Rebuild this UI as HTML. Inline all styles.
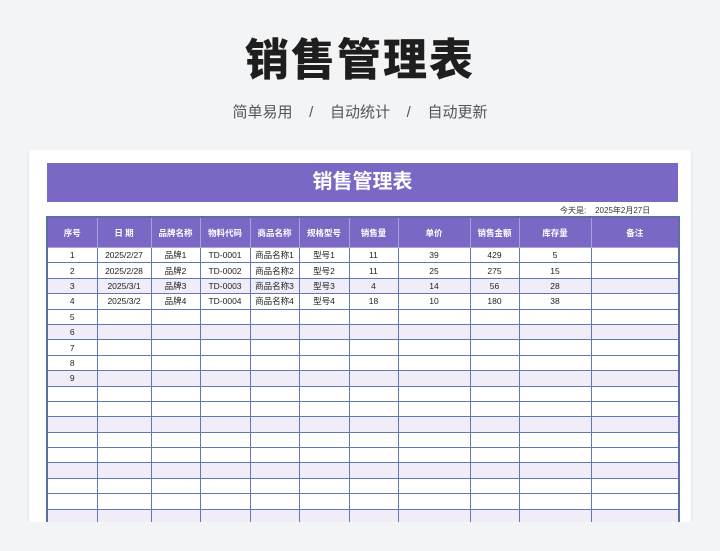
<!DOCTYPE html><html><head><meta charset="utf-8"><style>
body{margin:0;width:720px;height:551px;background:#f3f4f6;font-family:"Liberation Sans","Noto Sans CJK SC",sans-serif;position:relative;overflow:hidden}
.h1{position:absolute;top:24px;left:0;width:720px;text-align:center;font-size:44px;font-weight:900;color:#1e1e1e;letter-spacing:2px}
.sub{position:absolute;top:101px;left:0;width:720px;text-align:center;font-size:15px;color:#555}
.card{position:absolute;left:29px;top:150px;width:662px;height:372px;background:#fff;box-shadow:0 2px 4px rgba(0,0,0,.1)}
.bar{position:absolute;left:47px;top:163px;width:631px;height:39px;background:#7a68c4;color:#fff;font-size:20px;font-weight:bold;text-align:center;line-height:39px}
.date{position:absolute;top:205px;left:560px;font-size:8px;color:#333}
table{position:absolute;left:46px;top:216px;border-collapse:collapse;table-layout:fixed;border:2px solid #5a6fa8}
td,th{border:1px solid #6079b0;font-size:8.5px;text-align:center;padding:0;height:14.4px;color:#222;overflow:hidden;white-space:nowrap}
th{background:#7a68c4;color:#fff;height:29px;border-color:#a9a0dc;font-weight:bold}
tr.l td{background:#f0edf9}
</style></head><body>
<div class="h1">销售管理表</div>
<div class="sub">简单易用 &nbsp;&nbsp; / &nbsp;&nbsp; 自动统计 &nbsp;&nbsp; / &nbsp;&nbsp; 自动更新</div>
<div class="card"></div>
<div class="bar">销售管理表</div>
<div class="date">今天是: &nbsp;&nbsp; 2025年2月27日</div>
<table>
<colgroup><col style="width:50px"><col style="width:54px"><col style="width:49px"><col style="width:50px"><col style="width:49px"><col style="width:50px"><col style="width:49px"><col style="width:72px"><col style="width:49px"><col style="width:72px"><col style="width:88px"></colgroup>
<tr><th>序号</th><th>日 期</th><th>品牌名称</th><th>物料代码</th><th>商品名称</th><th>规格型号</th><th>销售量</th><th>单价</th><th>销售金额</th><th>库存量</th><th>备注</th></tr>
<tr><td>1</td><td>2025/2/27</td><td>品牌1</td><td>TD-0001</td><td>商品名称1</td><td>型号1</td><td>11</td><td>39</td><td>429</td><td>5</td><td></td></tr>
<tr><td>2</td><td>2025/2/28</td><td>品牌2</td><td>TD-0002</td><td>商品名称2</td><td>型号2</td><td>11</td><td>25</td><td>275</td><td>15</td><td></td></tr>
<tr class="l"><td>3</td><td>2025/3/1</td><td>品牌3</td><td>TD-0003</td><td>商品名称3</td><td>型号3</td><td>4</td><td>14</td><td>56</td><td>28</td><td></td></tr>
<tr><td>4</td><td>2025/3/2</td><td>品牌4</td><td>TD-0004</td><td>商品名称4</td><td>型号4</td><td>18</td><td>10</td><td>180</td><td>38</td><td></td></tr>
<tr><td>5</td><td></td><td></td><td></td><td></td><td></td><td></td><td></td><td></td><td></td><td></td></tr>
<tr class="l"><td>6</td><td></td><td></td><td></td><td></td><td></td><td></td><td></td><td></td><td></td><td></td></tr>
<tr><td>7</td><td></td><td></td><td></td><td></td><td></td><td></td><td></td><td></td><td></td><td></td></tr>
<tr><td>8</td><td></td><td></td><td></td><td></td><td></td><td></td><td></td><td></td><td></td><td></td></tr>
<tr class="l"><td>9</td><td></td><td></td><td></td><td></td><td></td><td></td><td></td><td></td><td></td><td></td></tr>
<tr><td></td><td></td><td></td><td></td><td></td><td></td><td></td><td></td><td></td><td></td><td></td></tr>
<tr><td></td><td></td><td></td><td></td><td></td><td></td><td></td><td></td><td></td><td></td><td></td></tr>
<tr class="l"><td></td><td></td><td></td><td></td><td></td><td></td><td></td><td></td><td></td><td></td><td></td></tr>
<tr><td></td><td></td><td></td><td></td><td></td><td></td><td></td><td></td><td></td><td></td><td></td></tr>
<tr><td></td><td></td><td></td><td></td><td></td><td></td><td></td><td></td><td></td><td></td><td></td></tr>
<tr class="l"><td></td><td></td><td></td><td></td><td></td><td></td><td></td><td></td><td></td><td></td><td></td></tr>
<tr><td></td><td></td><td></td><td></td><td></td><td></td><td></td><td></td><td></td><td></td><td></td></tr>
<tr><td></td><td></td><td></td><td></td><td></td><td></td><td></td><td></td><td></td><td></td><td></td></tr>
<tr class="l"><td></td><td></td><td></td><td></td><td></td><td></td><td></td><td></td><td></td><td></td><td></td></tr>
</table>
<div style="position:absolute;left:0;top:522px;width:720px;height:29px;background:#f3f4f6"></div>
</body></html>
